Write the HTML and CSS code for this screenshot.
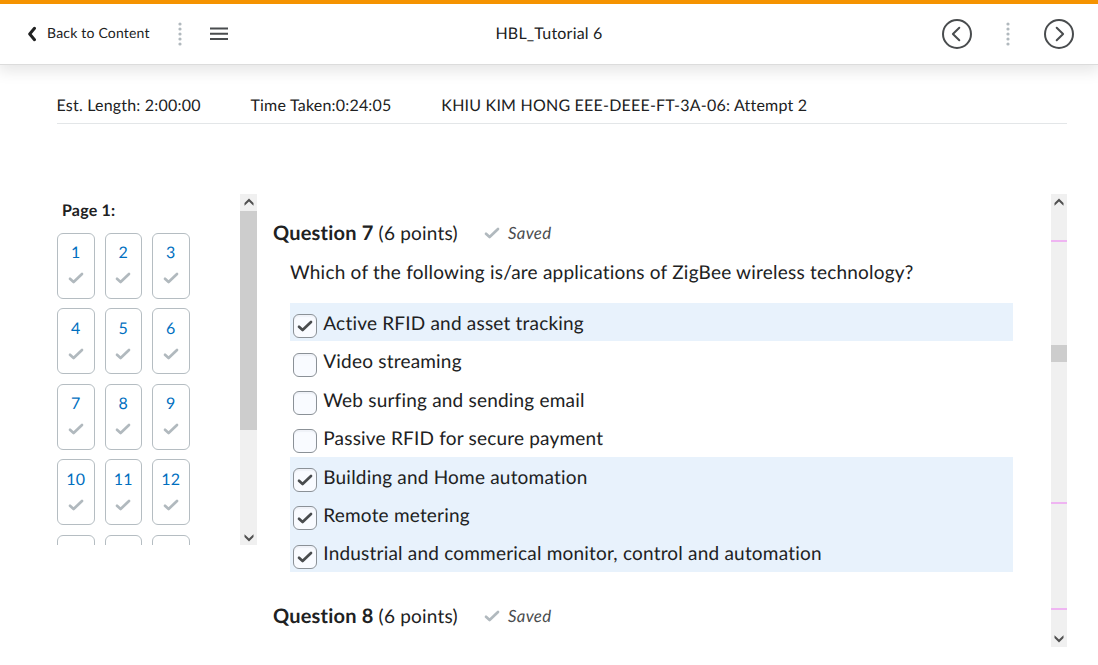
FILE: index.html
```html
<!DOCTYPE html>
<html lang="en">
<head>
<meta charset="utf-8">
<title>HBL_Tutorial 6</title>
<link rel="stylesheet" href="styles.css">
</head>
<body>
<svg class="defs" width="0" height="0" aria-hidden="true">
  <symbol id="check" viewBox="0 0 16 12"><path d="M2 6.8 5.6 10 14 2" fill="none" stroke="currentColor" stroke-width="2.7" stroke-linecap="round" stroke-linejoin="round"/></symbol>
  <symbol id="dots" viewBox="0 0 4 24"><g fill="#b1b9be"><circle cx="2" cy="2" r="1.6"/><circle cx="2" cy="7" r="1.6"/><circle cx="2" cy="12" r="1.6"/><circle cx="2" cy="17" r="1.6"/><circle cx="2" cy="22" r="1.6"/></g></symbol>
  <symbol id="arrow-up" viewBox="0 0 10 8"><path d="M.5 5 5 .6 9.500 5v2.700L5 3.600.5 7.700z" fill="#505050"/></symbol>
</svg>
<header class="topbar">
  <div class="side">
    <svg class="back-icon" viewBox="0 0 10 16"><path d="M8.500 2.300 3.700 8l4.800 5.700" fill="none" stroke="#202122" stroke-width="3" stroke-linecap="round" stroke-linejoin="round"/></svg>
    <a class="back">Back to Content</a>
    <svg class="dots"><use href="#dots"/></svg>
    <svg class="menu" viewBox="0 0 18 14"><path d="M0 1.500h18M0 6.700h18M0 11.900h18" stroke="#494c4e" stroke-width="2"/></svg>
  </div>
  <h1 class="title">HBL_Tutorial 6</h1>
  <div class="side right">
    <svg class="nav" viewBox="0 0 30 30"><circle cx="15" cy="15" r="14" /><path d="M17.300 8.700 10.900 15l6.400 6.300"/></svg>
    <svg class="dots"><use href="#dots"/></svg>
    <svg class="nav" viewBox="0 0 30 30"><circle cx="15" cy="15" r="14"/><path d="m12.700 8.700 6.400 6.300-6.400 6.300"/></svg>
  </div>
</header>
<div class="info"><span class="length">Est. Length: 2:00:00</span><span class="taken">Time Taken:0:24:05</span><span class="attempt">KHIU KIM HONG EEE-DEEE-FT-3A-06: Attempt 2</span></div>
<main class="content">
  <aside class="pages">
    <div class="page-list">
      <h2 class="page-title"><span>Page 1:</span></h2>
      <div class="tiles">
        <a class="tile"><span>1</span><svg><use href="#check"/></svg></a>
        <a class="tile"><span>2</span><svg><use href="#check"/></svg></a>
        <a class="tile"><span>3</span><svg><use href="#check"/></svg></a>
        <a class="tile"><span>4</span><svg><use href="#check"/></svg></a>
        <a class="tile"><span>5</span><svg><use href="#check"/></svg></a>
        <a class="tile"><span>6</span><svg><use href="#check"/></svg></a>
        <a class="tile"><span>7</span><svg><use href="#check"/></svg></a>
        <a class="tile"><span>8</span><svg><use href="#check"/></svg></a>
        <a class="tile"><span>9</span><svg><use href="#check"/></svg></a>
        <a class="tile"><span>10</span><svg><use href="#check"/></svg></a>
        <a class="tile"><span>11</span><svg><use href="#check"/></svg></a>
        <a class="tile"><span>12</span><svg><use href="#check"/></svg></a>
        <a class="tile"></a><a class="tile"></a><a class="tile"></a>
      </div>
    </div>
    <div class="scroll">
      <svg class="arrow"><use href="#arrow-up"/></svg>
      <div class="thumb"></div>
      <svg class="arrow down"><use href="#arrow-up"/></svg>
    </div>
  </aside>
  <section class="quiz">
    <div class="questions">
      <div class="qhead"><h2 class="qtitle"><b>Question 7</b> <span>(6 points)</span></h2><svg class="saved-icon"><use href="#check"/></svg><em class="saved">Saved</em></div>
      <p class="prompt"><span>Which of the following is/are applications of ZigBee wireless technology?</span></p>
      <div class="options">
        <label class="option on"><i class="box"><svg><use href="#check"/></svg></i><span>Active RFID and asset tracking</span></label>
        <label class="option"><i class="box"></i><span>Video streaming</span></label>
        <label class="option"><i class="box"></i><span>Web surfing and sending email</span></label>
        <label class="option"><i class="box"></i><span>Passive RFID for secure payment</span></label>
        <label class="option on"><i class="box"><svg><use href="#check"/></svg></i><span>Building and Home automation</span></label>
        <label class="option on"><i class="box"><svg><use href="#check"/></svg></i><span>Remote metering</span></label>
        <label class="option on"><i class="box"><svg><use href="#check"/></svg></i><span>Industrial and commerical monitor, control and automation</span></label>
      </div>
      <div class="qhead"><h2 class="qtitle"><b>Question 8</b> <span>(6 points)</span></h2><svg class="saved-icon"><use href="#check"/></svg><em class="saved">Saved</em></div>
    </div>
    <div class="scroll marked">
      <svg class="arrow"><use href="#arrow-up"/></svg>
      <div class="mark first"></div>
      <div class="thumb small"></div>
      <div class="mark second"></div>
      <div class="mark third"></div>
      <svg class="arrow down"><use href="#arrow-up"/></svg>
    </div>
  </section>
</main>
</body>
</html>
```

FILE: styles.css
```css
* { box-sizing: border-box; }
body { margin: 0; height: 665px; overflow: hidden; background: #fff; color: #202122; font-family: Lato, sans-serif; letter-spacing: 0.2px; text-rendering: geometricPrecision; }
h1, h2, p { margin: 0; font-weight: 400; }
svg { display: block; flex: none; }
.defs { position: absolute; }

.topbar { display: grid; grid-template-columns: 1fr auto 1fr; height: 65px; padding: 0 24px 2px 26px; border-top: 4px solid #f59300; border-bottom: 1px solid #dcdcdc; box-shadow: 0 4px 14px 2px rgba(0, 0, 0, 0.1); align-items: center; }
.side { display: flex; align-items: center; }
.right { justify-content: flex-end; gap: 34px; }
.back-icon { width: 10px; height: 16px; margin-top: 2px; }
.back { margin-left: 11px; width: 103px; font-size: 14px; line-height: 18px; white-space: nowrap; }
.dots { width: 4px; height: 24px; margin-top: 2px; }
.side:first-child .dots { margin-left: 28px; }
.menu { width: 18px; height: 14px; margin: 2px 0 0 28px; }
.title { font-size: 16px; line-height: 20px; margin: 1px 0 0 -2px; }
.nav { width: 30px; height: 30px; margin-top: 2px; fill: none; stroke: #494c4e; stroke-width: 2; stroke-linecap: round; stroke-linejoin: round; }

.info { display: flex; gap: 49.800px; height: 59px; margin: 0 31px 0 57px; padding-top: 31px; border-bottom: 1px solid #e3e6e8; font-size: 16px; line-height: 20px; white-space: nowrap; }
.length { margin-left: -0.500px; }
.attempt { letter-spacing: 0.220px; }

.content { display: flex; gap: 16px; margin: 70px 31px 0 57px; align-items: flex-start; }
.pages { display: flex; width: 200px; height: 351px; overflow: hidden; }
.page-list { flex: 1; }
.page-title { padding: 7px 0 0 5px; height: 38.600px; font-size: 16px; line-height: 20px; font-weight: 700; }
.tiles { display: grid; grid-template-columns: repeat(3, 37.500px); grid-auto-rows: 66px; gap: 9.600px 10px; }
.tile { display: flex; flex-direction: column; align-items: center; padding-top: 9.700px; border: 1px solid #b5bdc2; border-radius: 6px; color: #006fbf; font-size: 16px; line-height: 20px; }
.tile svg { width: 16px; height: 12px; margin-top: 9px; color: #b1b9be; }

.scroll { display: flex; flex-direction: column; align-items: center; width: 17px; height: 100%; background: #f0f0f0; }
.arrow { width: 10px; height: 8px; margin: 4px 0 5px; }
.down { transform: rotate(180deg); margin: auto 0 3px; }
.thumb { width: 100%; height: 219px; background: #cdcdcd; }
.small { height: 17px; margin-top: 103px; }
.marked { width: 16px; }
.marked .down { margin-bottom: 4px; }
.mark { width: 100%; height: 2px; background: #efb5f2; }
.first { margin-top: 29px; }
.second { margin-top: 140px; }
.third { margin-top: 104px; }

.quiz { display: flex; flex: 1; height: 453px; }
.questions { flex: 1; }
.qhead { display: flex; align-items: center; height: 28px; margin-top: 24.500px; }
.qtitle { width: 211px; font-size: 19px; white-space: nowrap; }
.qtitle b { font-size: 20px; }
.saved-icon { width: 16px; height: 12px; color: #b1b9be; }
.saved { margin-left: 8px; color: #494c4e; font-size: 16.800px; letter-spacing: 0.300px; }
.prompt { margin: 12.500px 0 0 17px; height: 44px; font-size: 19px; line-height: 28px; letter-spacing: 0.220px; white-space: nowrap; }
.options { width: 723px; margin: 0 0 30px 17px; }
.option { display: flex; height: 38.4px; padding-left: 3px; font-size: 19px; line-height: 24px; }
.option span { padding: 9px 0 0 6.300px; white-space: nowrap; }
.on { background: #e8f2fc; }
.box { display: flex; align-items: center; justify-content: center; width: 24px; height: 24px; margin-top: 11.300px; border: 1px solid #8b9197; border-radius: 6px; background: #f9fbff; box-shadow: inset 0 2px 1px rgba(190, 196, 206, 0.15); color: #494c4e; }
.box svg { width: 16px; height: 12px; }
```
